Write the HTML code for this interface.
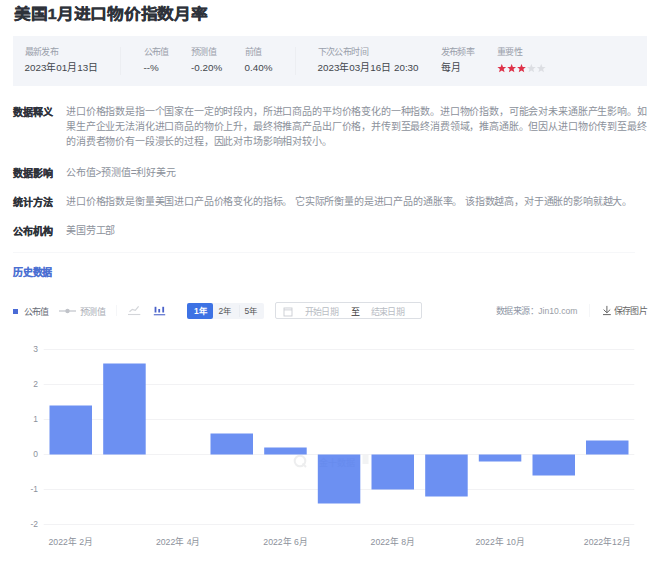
<!DOCTYPE html>
<html lang="zh-CN"><head><meta charset="utf-8">
<style>
*{margin:0;padding:0;box-sizing:border-box}
html,body{width:660px;height:561px;overflow:hidden;background:#fff}
body{font-family:"Liberation Sans",sans-serif;color:#333;position:relative}
.a{position:absolute;white-space:nowrap}
.title{left:13.5px;top:3.7px;font-size:17px;font-weight:bold;color:#2e323a;line-height:24px;-webkit-text-stroke:0.35px #2e323a;transform:scale(0.985,0.89);transform-origin:0 0}
.box{left:13px;top:36px;width:634px;height:50px;background:#f3f5f9}
.lbl{font-size:9px;letter-spacing:-0.56px;color:#9aa0ab;line-height:12px}
.val{font-size:9.84px;color:#42454c;line-height:14px}
.div{width:1px;height:28px;background:#eceef2;top:47px}
.sec{font-size:10px;letter-spacing:-0.16px;font-weight:bold;color:#2e323a;-webkit-text-stroke:0.2px currentColor;line-height:15px;left:13px}
.txt{font-size:10px;letter-spacing:-0.16px;color:#8c919b;line-height:14.85px;left:66px}
.tb{font-size:8.44px;color:#555;line-height:12px}
.gl{font-size:9px;letter-spacing:-0.56px;color:#8c919b;line-height:12px}
</style></head><body>
<div class="a title">美国1月进口物价指数月率</div>
<div class="a box"></div>
<div class="a lbl" style="left:24.5px;top:46px">最新发布</div>
<div class="a val" style="left:24.5px;top:61px">2023年01月13日</div>
<div class="a div" style="left:120px"></div>
<div class="a lbl" style="left:143.5px;top:46px">公布值</div>
<div class="a val" style="left:143.5px;top:61px">--%</div>
<div class="a lbl" style="left:191px;top:46px">预测值</div>
<div class="a val" style="left:191px;top:61px">-0.20%</div>
<div class="a lbl" style="left:244.5px;top:46px">前值</div>
<div class="a val" style="left:244.5px;top:61px">0.40%</div>
<div class="a div" style="left:295px"></div>
<div class="a lbl" style="left:317.5px;top:46px">下次公布时间</div>
<div class="a val" style="left:317.5px;top:61px">2023年03月16日 20:30</div>
<div class="a lbl" style="left:440.5px;top:46px">发布频率</div>
<div class="a val" style="left:440.5px;top:61px">每月</div>
<div class="a lbl" style="left:497px;top:46px">重要性</div>
<svg class="a" style="left:497px;top:63.7px" width="52" height="10" viewBox="0 0 52 10">
<path transform="translate(0.40 -0.4) scale(1.1)" d="M4 0.3L5.1 3.1L8 3.2L5.75 5L6.5 7.9L4 6.3L1.5 7.9L2.25 5L0 3.2L2.9 3.1Z" fill="#de3149"/><path transform="translate(10.25 -0.4) scale(1.1)" d="M4 0.3L5.1 3.1L8 3.2L5.75 5L6.5 7.9L4 6.3L1.5 7.9L2.25 5L0 3.2L2.9 3.1Z" fill="#de3149"/><path transform="translate(20.10 -0.4) scale(1.1)" d="M4 0.3L5.1 3.1L8 3.2L5.75 5L6.5 7.9L4 6.3L1.5 7.9L2.25 5L0 3.2L2.9 3.1Z" fill="#de3149"/><path transform="translate(29.95 -0.4) scale(1.1)" d="M4 0.3L5.1 3.1L8 3.2L5.75 5L6.5 7.9L4 6.3L1.5 7.9L2.25 5L0 3.2L2.9 3.1Z" fill="#dcdee3"/><path transform="translate(39.80 -0.4) scale(1.1)" d="M4 0.3L5.1 3.1L8 3.2L5.75 5L6.5 7.9L4 6.3L1.5 7.9L2.25 5L0 3.2L2.9 3.1Z" fill="#dcdee3"/>
</svg>

<div class="a sec" style="top:105px">数据释义</div>
<div class="a txt" style="top:105px">进口价格指数是指一个国家在一定的时段内，所进口商品的平均价格变化的一种指数。进口物价指数，可能会对未来通胀产生影响。如<br>果生产企业无法消化进口商品的物价上升，最终将推高产品出厂价格，并传到至最终消费领域，推高通胀。但因从进口物价传到至最终<br>的消费者物价有一段漫长的过程，因此对市场影响相对较小。</div>
<div class="a sec" style="top:165.5px">数据影响</div>
<div class="a txt" style="top:165.5px">公布值&gt;预测值=利好美元</div>
<div class="a sec" style="top:194.5px">统计方法</div>
<div class="a txt" style="top:194.5px">进口价格指数是衡量美国进口产品价格变化的指标。 它实际所衡量的是进口产品的通胀率。 该指数越高，对于通胀的影响就越大。</div>
<div class="a sec" style="top:223.5px">公布机构</div>
<div class="a txt" style="top:223.5px">美国劳工部</div>

<div class="a" style="left:13px;top:252px;width:622px;height:1px;background:#f6f7f9"></div>
<div class="a sec" style="top:264.8px;color:#4a6fd2;-webkit-text-stroke:0.1px #4a6fd2;left:13.4px;letter-spacing:-0.3px">历史数据</div>

<!-- toolbar -->
<div class="a" style="left:13.2px;top:308.5px;width:5.2px;height:5.2px;background:#4a6bd6"></div>
<div class="a gl" style="left:23.5px;top:305.5px;color:#666b75">公布值</div>
<svg class="a" style="left:58px;top:306px" width="19" height="10"><line x1="1" y1="5" x2="18" y2="5" stroke="#c0c3c9" stroke-width="1.2"/><circle cx="9.5" cy="5" r="2.2" fill="#c0c3c9"/></svg>
<div class="a gl" style="left:80px;top:305.5px;color:#a9adb5">预测值</div>
<div class="a" style="left:115.5px;top:305px;width:1px;height:11px;background:#f5f6f8"></div>
<svg class="a" style="left:127px;top:305px" width="15" height="11"><path d="M2.5 6.8L5.3 4.4L8.3 5.4L11.6 1.3" fill="none" stroke="#d3d5d9" stroke-width="1.2"/><line x1="1" y1="9.5" x2="13.3" y2="9.5" stroke="#d3d5d9" stroke-width="1.1"/></svg>
<svg class="a" style="left:152px;top:305px" width="15" height="11"><rect x="2.6" y="1.8" width="1.8" height="5.7" fill="#4a62c9"/><rect x="6.3" y="4" width="1.8" height="3.5" fill="#4a62c9"/><rect x="10.3" y="1.8" width="1.8" height="5.7" fill="#4a62c9"/><line x1="1.8" y1="9.75" x2="13.2" y2="9.75" stroke="#4a62c9" stroke-width="1.1"/></svg>
<div class="a" style="left:187px;top:303px;width:76.5px;height:16px;background:#f2f4f8;border-radius:2px"></div>
<div class="a" style="left:238.5px;top:305px;width:1px;height:12px;background:#e9ecf1"></div>
<div class="a" style="left:187px;top:303px;width:26px;height:16px;background:#3d72e4;border-radius:2px"></div>
<div class="a tb" style="left:194px;top:305px;color:#fff;font-weight:bold">1年</div>
<div class="a tb" style="left:218.5px;top:305px">2年</div>
<div class="a tb" style="left:244.5px;top:305px">5年</div>
<div class="a" style="left:274.5px;top:302.3px;width:147px;height:17px;border:1px solid #dcdfe4;border-radius:2px;background:#fff"></div>
<svg class="a" style="left:282.5px;top:306.5px" width="10" height="10"><rect x="1" y="1" width="8" height="8" fill="none" stroke="#c9ccd2" stroke-width="0.9"/><line x1="1" y1="2.9" x2="9" y2="2.9" stroke="#c9ccd2" stroke-width="0.9"/><line x1="3" y1="-0.2" x2="7" y2="-0.2" stroke="#e0e2e6" stroke-width="0.8"/></svg>
<div class="a gl" style="left:304.5px;top:305.5px;color:#b9bdc4">开始日期</div>
<div class="a gl" style="left:350.5px;top:305.5px;color:#333">至</div>
<div class="a gl" style="left:370.5px;top:305.5px;color:#b9bdc4">结束日期</div>
<div class="a gl" style="left:496px;top:305px;color:#8f97a6">数据来源：<span style="color:#9a9ea6;font-size:8.6px;letter-spacing:0">Jin10.com</span></div>
<div class="a" style="left:589px;top:304px;width:1px;height:13px;background:#f5f6f8"></div>
<svg class="a" style="left:602px;top:305px" width="10" height="11"><path d="M4.9 0.9V7.6M1.6 4.6L4.9 7.8L8.2 4.6M1 9.6H8.8" fill="none" stroke="#666" stroke-width="1"/></svg>
<div class="a gl" style="left:613.5px;top:305px;color:#666">保存图片</div>

<!-- chart -->
<svg class="a" style="left:0;top:330px" width="660" height="231" viewBox="0 330 660 231">
<g stroke="#f2f2f4" stroke-width="1">
<line x1="43.7" y1="349.5" x2="634.3" y2="349.5"/>
<line x1="43.7" y1="384.5" x2="634.3" y2="384.5"/>
<line x1="43.7" y1="419.5" x2="634.3" y2="419.5"/>
<line x1="43.7" y1="454.5" x2="634.3" y2="454.5"/>
<line x1="43.7" y1="489.5" x2="634.3" y2="489.5"/>
<line x1="43.7" y1="524.5" x2="634.3" y2="524.5"/>
</g>
<g opacity="0.45">
<circle cx="300" cy="461" r="5.3" fill="none" stroke="#d9dadd" stroke-width="2"/><path d="M302.5 463.5L306 467" stroke="#d9dadd" stroke-width="2"/>
</g>
<g fill="#6c90f2">
<rect x="49.5" y="405.5" width="42.5" height="49"/>
<rect x="103.2" y="363.5" width="42.5" height="91"/>
<rect x="210.5" y="433.5" width="42.5" height="21"/>
<rect x="264.2" y="447.5" width="42.5" height="7"/>
<rect x="317.8" y="454.5" width="42.5" height="49"/>
<rect x="371.5" y="454.5" width="42.5" height="35"/>
<rect x="425.2" y="454.5" width="42.5" height="42"/>
<rect x="478.8" y="454.5" width="42.5" height="7"/>
<rect x="532.5" y="454.5" width="42.5" height="21"/>
<rect x="586" y="440.5" width="42.5" height="14"/>
</g>
<text x="319" y="465.5" font-family="Liberation Sans, sans-serif" font-size="9" fill="#5f84e6" opacity="0.35">金十数据</text><rect x="362.5" y="455" width="6" height="9" fill="#eceef0" opacity="0.7"/>
<g font-family="Liberation Sans, sans-serif" font-size="8.44" fill="#8c919b" text-anchor="end">
<text x="38" y="351.8">3</text><text x="38" y="386.8">2</text><text x="38" y="421.8">1</text><text x="38" y="456.8">0</text><text x="38" y="491.8">-1</text><text x="38" y="526.8">-2</text>
</g>
<g font-family="Liberation Sans, sans-serif" font-size="8.7" fill="#8c919b" text-anchor="middle">
<text x="70.8" y="544.5">2022年 2月</text>
<text x="178.2" y="544.5">2022年 4月</text>
<text x="285.6" y="544.5">2022年 6月</text>
<text x="392.9" y="544.5">2022年 8月</text>
<text x="500.1" y="544.5">2022年 10月</text>
<text x="607.3" y="544.5">2022年12月</text>
</g>
</svg>
</body></html>
